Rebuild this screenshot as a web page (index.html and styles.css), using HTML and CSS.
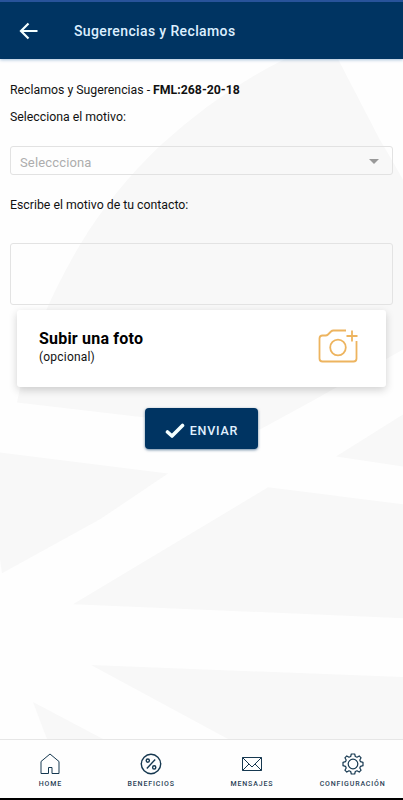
FILE: index.html
```html
<!DOCTYPE html>
<html lang="es">
<head>
<meta charset="utf-8">
<meta name="viewport" content="width=device-width">
<title>Sugerencias y Reclamos</title>
<link rel="stylesheet" href="styles.css">
</head>
<body>
<div class="app">
  <header class="topbar">
    <svg class="back" viewBox="0 0 20 18" width="20" height="18"><path d="M9.500 1.500 2 9l7.500 7.500M2.300 9H18.500"/></svg>
    <h1 class="title">Sugerencias y Reclamos</h1>
  </header>
  <main class="content">
    <svg class="backdrop" viewBox="0 59 403 681" preserveAspectRatio="none">
      <path d="M285 59Q220 91 160 146Q112 192 80 245Q30 330 17 403L145 418 260 430 315 400 403 350V180Q391 158 380 140L338 59Z"/>
      <path d="M0 453 168 474 100 520 2 574 0 560Z"/>
      <path d="M403 415 336 457 403 467Z"/>
      <path d="M268 488 403 505V619L73 605Z"/>
      <path d="M91 666 403 678V740H228Z"/>
      <path d="M33 703 103 740H47Z"/>
    </svg>
    <p class="line intro">Reclamos y Sugerencias - <b>FML:268-20-18</b></p>
    <p class="line reason">Selecciona el motivo:</p>
    <div class="select"><span>Seleccciona</span><i class="caret"></i></div>
    <p class="line contact">Escribe el motivo de tu contacto:</p>
    <div class="textarea"></div>
    <section class="card">
      <div>
        <h2 class="card-title">Subir una foto</h2>
        <p class="card-note">(opcional)</p>
      </div>
      <svg class="camera" viewBox="0 0 40 34" width="40" height="34"><path d="M28 1.500H15.500Q14 1.500 13 2.500L10 5.500Q9 6.500 7.500 6.500H4.500Q1.500 6.500 1.500 9.500V29.500Q1.500 32.500 4.500 32.500H35.500Q38.500 32.500 38.500 29.500V12M34 1.500V12.500M28.500 7H39.500"/><circle cx="20" cy="18.500" r="7.800"/></svg>
    </section>
    <button class="send"><svg viewBox="0 0 20 16" width="20" height="16"><path d="M2.500 9 7 13 17.500 2.500"/></svg><span>ENVIAR</span></button>
  </main>
  <nav class="tabs">
    <div class="tab"><svg viewBox="0 0 22 22" width="22" height="22"><path d="M2 8.500 11 1 20 8.500V20.500H13V14.500H9.500V20.500H2Z"/></svg><span>HOME</span></div>
    <div class="tab"><svg viewBox="0 0 22 22" width="22" height="22"><g class="bold"><circle cx="11" cy="11" r="9.700"/><path d="M6.800 15.500 15.200 6.500"/><circle cx="7.800" cy="7.600" r="1.600"/><circle cx="14.200" cy="14.400" r="1.600"/></g></svg><span>BENEFICIOS</span></div>
    <div class="tab"><svg viewBox="0 0 22 22" width="22" height="22"><path d="M1.500 4.500H20.500V17.500H1.500ZM1.500 4.500 11 14 20.500 4.500M1.500 17.500 8 11M20.500 17.500 14 11"/></svg><span>MENSAJES</span></div>
    <div class="tab"><svg viewBox="0 0 22 22" width="22" height="22"><g class="gear"><path d="M9.300 1H12.700L13.300 3.500 15 4.200 17.200 2.900 19.100 4.800 17.800 7 18.500 8.700 21 9.300V12.700L18.500 13.300 17.800 15 19.100 17.200 17.200 19.100 15 17.800 13.300 18.500 12.700 21H9.300L8.700 18.500 7 17.800 4.800 19.100 2.900 17.200 4.200 15 3.500 13.300 1 12.700V9.300L3.500 8.700 4.200 7 2.900 4.800 4.800 2.900 7 4.200 8.700 3.500Z"/><circle cx="11" cy="11" r="4.800"/></g></svg><span>CONFIGURACIÓN</span></div>
  </nav>
</div>
</body>
</html>
```
FILE: styles.css
```css
* { box-sizing: border-box; }
body {
  margin: 0;
  font-family: Roboto, sans-serif;
  color: #111;
  background: #fefefe;
}
h1, h2, p { margin: 0; }
svg { fill: none; display: block; }
.app {
  height: 800px;
  display: flex;
  flex-direction: column;
  border-bottom: 2px solid #000;
  overflow: hidden;
}
.topbar {
  height: 59px;
  flex: none;
  display: flex;
  align-items: center;
  padding-left: 19px;
  gap: 35px;
  background: #003462;
  border-top: 2px solid #28539a;
  box-shadow: 0 1px 3px #5688bb80;
  position: relative;
  z-index: 1;
}
.back { stroke: #f3ffff; stroke-width: 2.2; }
.title {
  font-size: 14px;
  line-height: 20px;
  font-weight: 500;
  letter-spacing: 0.37px;
  color: #dcefff;
}
.content {
  flex: 1;
  position: relative;
  isolation: isolate;
  display: flex;
  flex-direction: column;
  padding: 23px 10px 0;
}
.backdrop {
  position: absolute;
  inset: 0;
  width: 100%;
  height: 100%;
  z-index: -1;
  fill: #f8f8f8;
}
.line {
  font-size: 12.3px;
  line-height: 17px;
}
.reason { margin-top: 10px; }
.select {
  height: 29px;
  margin-top: 20px;
  padding: 3px 13px 0 9px;
  border: 1px solid #e2e2e2;
  border-radius: 3px;
  display: flex;
  align-items: center;
  justify-content: space-between;
  font-size: 13px;
  letter-spacing: 0.15px;
  color: #adadad;
}
.caret {
  margin-top: -2px;
  border: 5px solid transparent;
  border-top-color: #999;
  border-bottom: 0;
}
.contact { margin-top: 22px; }
.textarea {
  height: 62px;
  margin-top: 29px;
  border: 1px solid #e3e3e3;
  border-radius: 3px;
}
.card {
  height: 77px;
  margin: 5px 7px 0;
  padding: 19px 28px 0 22px;
  display: flex;
  justify-content: space-between;
  align-items: flex-start;
  background: #fff;
  border-radius: 3px;
  box-shadow: 0 3px 8px #0000002e;
}
.card-title {
  font-size: 16px;
  line-height: 20px;
  font-weight: 700;
  letter-spacing: 0.2px;
  color: #000;
}
.card-note { font-size: 12px; line-height: 17px; letter-spacing: 0.2px; }
.camera { stroke: #edb45f; stroke-width: 1.8; }
.send {
  width: 113px;
  height: 41px;
  margin: 21px auto 0;
  padding: 5px 0 0;
  border: 0;
  border-radius: 4px;
  display: flex;
  align-items: center;
  justify-content: center;
  gap: 5px;
  font: 500 12.5px/20px Roboto, sans-serif;
  letter-spacing: 0.8px;
  color: #e0f1ff;
  background: #003462;
  box-shadow: 0 1px 3px #00346299;
}
.send svg { stroke: #f3ffff; stroke-width: 3.6; stroke-linecap: round; stroke-linejoin: round; }
.tabs {
  height: 59px;
  flex: none;
  display: grid;
  grid-template-columns: repeat(4, 1fr);
  padding-top: 13px;
  border-top: 1px solid #e6e6e6;
  background: #fefefe;
}
.tab {
  display: flex;
  flex-direction: column;
  align-items: center;
  gap: 3px;
  font-size: 7px;
  line-height: 12px;
  font-weight: 500;
  letter-spacing: 0.85px;
  color: #2a4256;
}
.tab svg { stroke: #163850; stroke-width: 1; }
.bold { stroke-width: 1.4; }
.gear { stroke-width: 1.2; stroke-linejoin: round; }
```
